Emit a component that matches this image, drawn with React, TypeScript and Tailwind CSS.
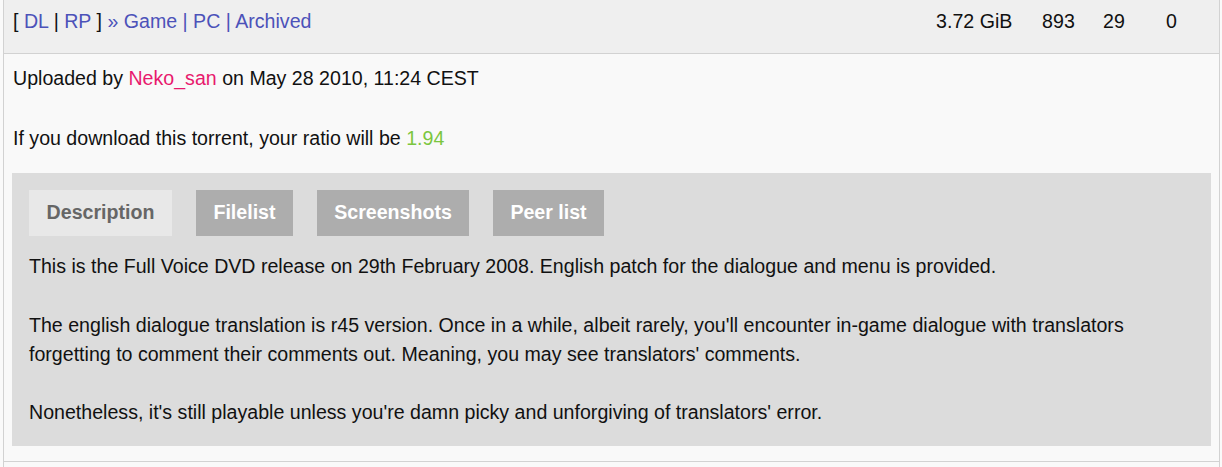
export default function App() {
  const link = "text-[#4c52b9]";
  return (
    <div className="min-h-screen bg-[#fafafa] font-['Liberation_Sans',Arial,sans-serif] text-[19.6px] text-[#111]">
      <div className="ml-[3px] w-[1217px] border-x border-[#d2d2d2]">
        <div className="flex h-[54px] border-b border-[#d2d2d2] bg-[#efefef] pl-[9px] pt-[7px] leading-[29px]">
          <div>
            <span>[ </span>
            <span className={link}>DL</span>
            <span> | </span>
            <span className={link}>RP</span>
            <span> ] </span>
            <span className={link}>» Game | PC | Archived</span>
          </div>
          <div className="ml-auto flex pr-[42px]">
            <span className="w-[106px]">3.72 GiB</span>
            <span className="w-[61px]">893</span>
            <span className="w-[63px]">29</span>
            <span>0</span>
          </div>
        </div>

        <div className="border-b border-[#d2d2d2] bg-[#f9f9f9]">
          <div className="px-[9px] pt-[9px] leading-[30px]">
            <p>
              Uploaded by <span className="text-[#e8196e]">Neko_san</span> on May 28 2010, 11:24 CEST
            </p>
            <p className="mt-[30px]">
              If you download this torrent, your ratio will be <span className="text-[#7bc63f]">1.94</span>
            </p>
          </div>

          <div className="mx-[8px] mb-[15px] mt-[20px] bg-[#dcdcdc] px-[17px] pb-[18px] pt-[17px]">
            <div className="flex gap-[24px] font-bold">
              <div className="flex h-[46px] w-[143px] items-center justify-center bg-[#e8e8e8] text-[#666]">Description</div>
              <div className="flex h-[46px] w-[97px] items-center justify-center bg-[#adadad] text-white">Filelist</div>
              <div className="flex h-[46px] w-[152px] items-center justify-center bg-[#adadad] text-white">Screenshots</div>
              <div className="flex h-[46px] w-[111px] items-center justify-center bg-[#adadad] text-white">Peer list</div>
            </div>
            <div className="mt-[16px] leading-[29.25px]">
              <p>This is the Full Voice DVD release on 29th February 2008. English patch for the dialogue and menu is provided.</p>
              <p className="mt-[29.25px]">
                The english dialogue translation is r45 version. Once in a while, albeit rarely, you'll encounter in-game dialogue with translators
                <br />
                forgetting to comment their comments out. Meaning, you may see translators' comments.
              </p>
              <p className="mt-[29.25px]">Nonetheless, it's still playable unless you're damn picky and unforgiving of translators' error.</p>
            </div>
          </div>
        </div>
        <div className="h-[40px] bg-[#f9f9f9]" />
      </div>
    </div>
  );
}
